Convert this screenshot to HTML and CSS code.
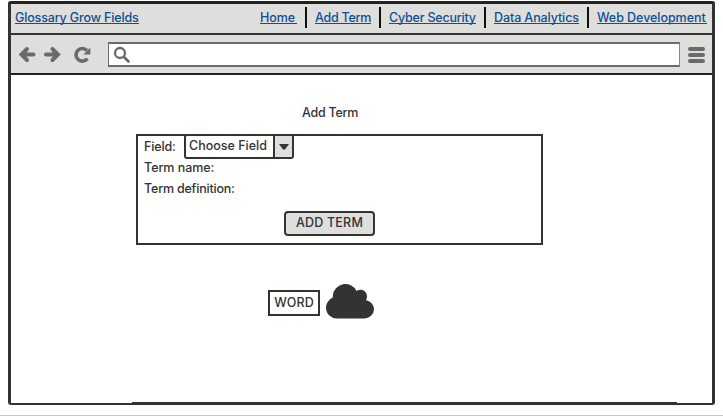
FILE: index.html
```html
<!DOCTYPE html>
<html lang="en">
<head>
<meta charset="utf-8">
<title>Add Term</title>
<link rel="stylesheet" href="styles.css">
</head>
<body>
<div class="window">
  <header class="topbar">
    <a class="brand" href="#">Glossary Grow Fields</a>
    <nav class="nav">
      <a class="home" href="#">Home</a><i></i>
      <a class="add" href="#">Add Term</a><i></i>
      <a class="cyber" href="#">Cyber Security</a><i></i>
      <a class="data" href="#">Data Analytics</a><i></i>
      <a class="web" href="#">Web Development</a>
    </nav>
  </header>
  <div class="toolbar">
    <svg class="arrows" width="84" height="24" viewBox="0 0 84 24" fill="none" stroke="#6b6b6b" stroke-width="4">
      <path d="M10 7 4.500 12.500l5.500 5.500M5 12.500H16.500" stroke-linecap="round"/>
      <path d="M35.500 7l5.500 5.500-5.500 5.500M40.500 12.500H29" stroke-linecap="round"/>
      <path d="M70 8.500A6.300 6.300 0 1 0 70.500 16.500" stroke-width="3.600"/>
      <path d="M73.500 5.500V12.500H66.500Z" fill="#6b6b6b" stroke="none"/>
    </svg>
    <div class="address">
      <svg width="20" height="20" viewBox="0 0 20 20" fill="none" stroke="#6b6b6b">
        <circle cx="7" cy="7" r="5" stroke-width="2.300"/>
        <path d="M11 11 15.500 15.500" stroke-width="2.800" stroke-linecap="round"/>
      </svg>
    </div>
    <div class="menu"><b></b><b></b><b></b></div>
  </div>
  <main>
    <h1>Add Term</h1>
    <form class="panel">
      <div class="field">
        <span class="label">Field:</span>
        <div class="select"><span>Choose Field</span><div class="drop"><svg width="10" height="6" viewBox="0 0 10 6"><path d="M0 0H10L6 5.500H4Z" fill="#333"/></svg></div></div>
      </div>
      <div class="row name">Term name:</div>
      <div class="row definition">Term definition:</div>
      <button type="button">ADD TERM</button>
    </form>
    <div class="cloud-row">
      <div class="word">WORD</div>
      <svg width="48" height="36" viewBox="0 0 48 36" fill="#333">
        <path d="M11 35.500A10.800 10.800 0 0 1 0 25C0 20 3 16.500 6.800 14.500V12.500A12.500 12.500 0 0 1 30.500 8C35 5 41 8 41 13.500 41 15 40.500 16 40 17.200 45 18.300 48 22 48 26.500A9.600 9.600 0 0 1 38.500 35.500Z"/>
      </svg>
    </div>
  </main>
  <footer></footer>
</div>
</body>
</html>
```

FILE: styles.css
```css
* { box-sizing: border-box; }
body {
  margin: 0;
  height: 416px;
  padding: 1px 8px 0;
  background: #fff;
  border-bottom: 1px solid #c8c8c8;
  color: #333;
  font: 500 12.5px/16px Inter, sans-serif;
  letter-spacing: -0.15px;
  overflow: hidden;
}
.window {
  display: flex;
  flex-direction: column;
  width: 707px;
  height: 404px;
  border: 3px solid #333;
  border-top-color: #222;
  border-bottom-width: 2px;
  border-radius: 3px;
}
main { flex: 1; }
footer { height: 1px; margin: 0 35px 0 121px; background: #333; }
.topbar {
  height: 31px;
  padding: 5px 5px 0 4px;
  display: flex;
  justify-content: space-between;
  background: #dededd;
  border-bottom: 2px solid #333;
}
.topbar a {
  height: 15px;
  line-height: 18px;
  color: #0f4f94;
  text-decoration: none;
  white-space: nowrap;
  border-bottom: 1px solid #0f4f94;
}
.brand { width: 124px; }
.nav { display: flex; letter-spacing: -0.05px; }
.nav i {
  width: 2px;
  height: 21px;
  margin: -2px 8px 0;
  background: #111;
}
.home { width: 37px; }
.add { width: 56px; letter-spacing: -0.25px; }
.cyber { width: 87px; letter-spacing: -0.2px; }
.data { width: 85px; letter-spacing: -0.1px; }
.web { width: 110px; }
.toolbar {
  height: 40px;
  padding: 7px 7px 0 6px;
  display: flex;
  background: #dededd;
  border-bottom: 2px solid #222;
}
.address {
  width: 573px;
  height: 25px;
  margin-left: 7px;
  padding: 2px 4px;
  background: #fff;
  border: 2px solid #6b6b6b;
  border-left-width: 1px;
  border-right: 1px solid #888;
}
.address svg { display: block; }
.menu {
  display: flex;
  flex-direction: column;
  gap: 2px;
  margin: 5px 0 0 8px;
}
.menu b {
  width: 17px;
  height: 4px;
  border-radius: 2px;
  background: #6b6b6b;
}
h1 {
  width: 56px;
  margin: 30px 0 0 291px;
  font: inherit;
  letter-spacing: -0.25px;
  white-space: nowrap;
}
.panel {
  width: 407px;
  height: 111px;
  margin: 13px 0 0 125px;
  border: 2px solid #333;
}
.field { display: flex; height: 23px; padding-left: 6px; }
.label { width: 40px; padding-top: 3px; }
.select {
  width: 110px;
  height: 25px;
  margin-top: -2px;
  display: flex;
  border: 2px solid #333;
  border-radius: 3px;
  letter-spacing: 0;
}
.select span { width: 87px; padding: 2px 0 0 3px; white-space: nowrap; }
.drop {
  flex: 1;
  display: flex;
  align-items: center;
  justify-content: center;
  border-left: 2px solid #333;
  background: #dededd;
}
.row { height: 21px; padding: 1px 0 0 6px; letter-spacing: -0.05px; }
.definition { letter-spacing: -0.2px; }
button {
  display: block;
  width: 91px;
  height: 25px;
  margin: 10px 0 0 146px;
  padding: 0 0 2px;
  border: 2px solid #333;
  border-radius: 4px;
  background: #dededd;
  color: #333;
  font: inherit;
  letter-spacing: 0.2px;
}
.cloud-row { display: flex; gap: 6px; margin: 38px 0 0 257px; }
.word {
  width: 52px;
  height: 26px;
  margin-top: 7px;
  padding-top: 3px;
  border: 2px solid #333;
  letter-spacing: 0.1px;
  text-align: center;
}
```
